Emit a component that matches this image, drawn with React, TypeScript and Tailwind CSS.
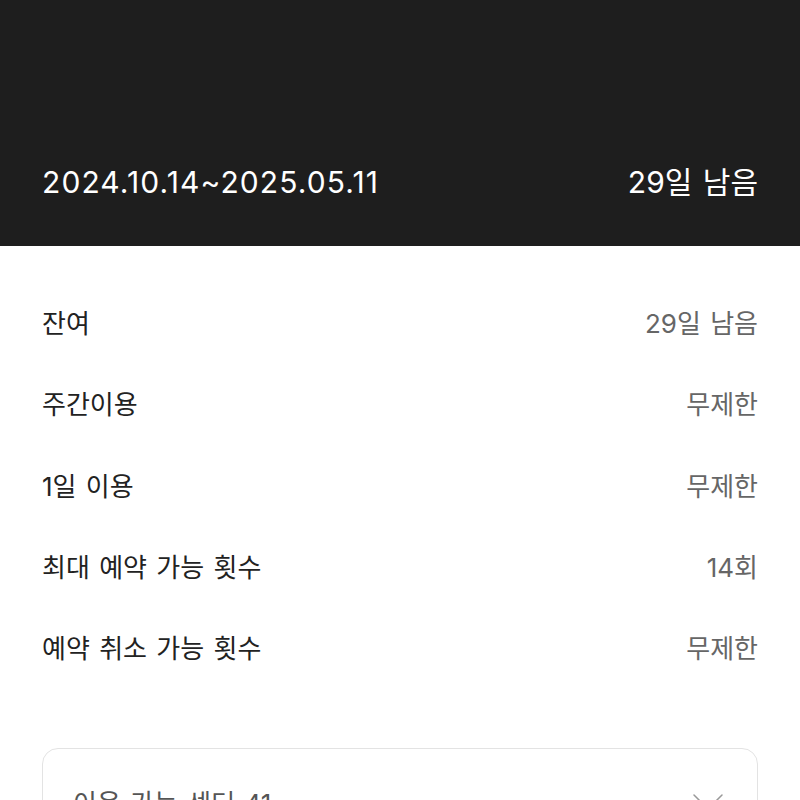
const rows = [
  { label: '잔여', value: '29일 남음' },
  { label: '주간이용', value: '무제한' },
  { label: '1일 이용', value: '무제한' },
  { label: '최대 예약 가능 횟수', value: '14회' },
  { label: '예약 취소 가능 횟수', value: '무제한' },
];

export default function App() {
  return (
    <div
      className="w-[800px] h-[800px] overflow-hidden bg-white [word-spacing:2px]"
      style={{ fontFamily: 'Inter, "Noto Sans CJK KR", sans-serif' }}
    >
      {/* 기간 헤더 */}
      <div className="h-[246px] bg-[#1e1e1e] flex items-end justify-between px-[42px] pb-[43px]">
        <span className="text-[30px] leading-[42px] tracking-[1.1px] text-white">2024.10.14~2025.05.11</span>
        <span className="text-[30px] leading-[42px] text-white">29일 남음</span>
      </div>

      {/* 이용 정보 */}
      <div className="px-[42px] pt-[37px]">
        {rows.map((row) => (
          <div key={row.label} className="h-[81.25px] flex items-center justify-between">
            <span className="text-[26px] text-[#222]">{row.label}</span>
            <span className="text-[26px] text-[#666]">{row.value}</span>
          </div>
        ))}

        {/* 이용 가능 센터 */}
        <div className="mt-[59px] border border-[#e3e3e3] rounded-[16px] pl-[30px] pr-[34px] pt-[37px] pb-[28px] flex items-start justify-between">
          <span className="text-[26px] leading-[36px] text-[#555]">이용 가능 센터 41</span>
          <ChevronIcon />
        </div>
      </div>
    </div>
  );
}

function ChevronIcon() {
  return (
    <svg className="mt-[8px]" width="30" height="16" viewBox="0 0 30 16" fill="none">
      <path d="M1 1L15 15L29 1" stroke="#999" strokeWidth="1.5" strokeLinecap="round" strokeLinejoin="round" />
    </svg>
  );
}
